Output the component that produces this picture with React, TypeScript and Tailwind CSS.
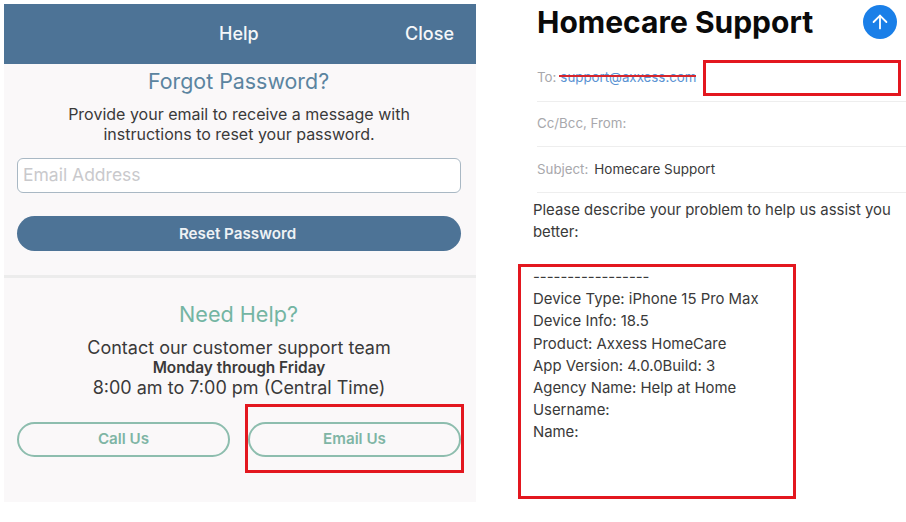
import { ArrowUp } from "lucide-react";

const font = { fontFamily: "Inter, 'Liberation Sans', sans-serif" };

function RedBox({ className }: { className: string }) {
  return <div className={`absolute border-[3px] border-[#e3171f] ${className}`} />;
}

function HelpPanel() {
  return (
    <div className="relative ml-1 mt-1 h-[498px] w-[472px] shrink-0 bg-[#faf8f9]">
      <div className="flex h-[60px] items-center justify-between bg-[#4d7396] pr-[22px] pl-[215px] pb-[2px] text-[18px] font-medium text-[#f5f7f9]">
        <span>Help</span>
        <span>Close</span>
      </div>
      <h2 className="mt-1 pr-[3px] text-center text-[21.4px] leading-[26px] text-[#5b84a0]">Forgot Password?</h2>
      <p className="mt-[11px] pr-[2px] text-center text-[16px] leading-[19.5px] text-[#3a3a3a]">
        Provide your email to receive a message with
        <br />
        instructions to reset your password.
      </p>
      <div className="ml-[13px] mr-[15px] mt-[14px] flex h-[35px] items-center rounded-[6px] border-[1.5px] border-[#a9b8c4] bg-white px-[5px] text-[17.5px] text-[#c9c9cc]">
        Email Address
      </div>
      <div className="ml-[13px] mr-[15px] mt-[23px] flex h-[35px] items-center justify-center rounded-full bg-[#4d7396] pt-[2px] pr-[3px] text-[15.2px] font-semibold text-[#eef2f5]">
        Reset Password
      </div>
      <div className="mt-[24px] h-[3px] bg-[#ececec]" />
      <h2 className="mt-[23px] pr-[3px] text-center text-[21.6px] leading-[26px] text-[#74b5a3]">Need Help?</h2>
      <p className="mt-[10px] pr-[2px] text-center text-[18px] leading-[21px] text-[#3a3a3a]">Contact our customer support team</p>
      <p className="pr-[2px] text-center text-[15.4px] font-semibold leading-[19px] text-[#3a3a3a]">Monday through Friday</p>
      <p className="pr-[2px] text-center text-[18px] leading-[22px] text-[#3a3a3a]">8:00 am to 7:00 pm (Central Time)</p>
      <div className="ml-[13px] mr-[15px] mt-[23px] flex gap-[18px]">
        <div className="flex h-[35px] flex-1 items-center justify-center rounded-full border-2 border-[#8dbdae] text-[15.2px] font-semibold text-[#7fb5a5]">
          Call Us
        </div>
        <div className="flex h-[35px] flex-1 items-center justify-center rounded-full border-2 border-[#8dbdae] text-[15.2px] font-semibold text-[#7fb5a5]">
          Email Us
        </div>
      </div>
      <RedBox className="left-[241px] top-[400px] h-[69px] w-[219px]" />
    </div>
  );
}

const deviceLines = [
  "Device Type: iPhone 15 Pro Max",
  "Device Info: 18.5",
  "Product: Axxess HomeCare",
  "App Version: 4.0.0Build: 3",
  "Agency Name: Help at Home",
  "Username:",
  "Name:",
];

function MailPanel() {
  return (
    <div className="relative ml-[42px] flex-1 bg-white">
      <div className="flex items-center justify-between pr-[9px] pl-[19px] pt-[2px]">
        <h1 className="text-[30px] font-bold leading-[40px] text-[#0a0a0a]">Homecare Support</h1>
        <div className="flex h-[34px] w-[34px] items-center justify-center rounded-full bg-[#1a7fe8]">
          <ArrowUp className="h-[22px] w-[22px] text-white" strokeWidth={2} />
        </div>
      </div>
      <div className="ml-[19px] mt-[14px] text-[13.3px]">
        <div className="flex h-[46px] items-center border-b border-[#eeeeee] pb-[2px]">
          <span className="text-[#a8a8ac]">To:</span>
          <span className="relative ml-1 text-[#5b93d3]">
            support@axxess.com
            <span className="absolute left-[-1px] right-0 top-[7px] h-[2px] bg-[#d6262c]" />
          </span>
        </div>
        <div className="flex h-[45px] items-center border-b border-[#eeeeee] text-[#a8a8ac]">Cc/Bcc, From:</div>
        <div className="flex h-[46px] items-center border-b border-[#eeeeee]">
          <span className="text-[#a8a8ac]">Subject:</span>
          <span className="ml-[6px] text-[13.5px] text-[#3a3a3a]">Homecare Support</span>
        </div>
      </div>
      <p className="ml-[15px] mt-[6px] text-[14.9px] leading-[22px] text-[#3a3a3a]">
        Please describe your problem to help us assist you
        <br />
        better:
      </p>
      <div className="ml-[15px] mt-[23px] text-[14.9px] leading-[22.2px] text-[#3a3a3a]">
        <div>-----------------</div>
        {deviceLines.map((line) => (
          <div key={line}>{line}</div>
        ))}
      </div>
      <RedBox className="left-[185px] top-[60px] h-[36px] w-[198px]" />
      <RedBox className="left-0 top-[264px] h-[235px] w-[278px]" />
    </div>
  );
}

export default function App() {
  return (
    <div className="flex h-[522px] w-[906px] overflow-hidden bg-white" style={font}>
      <HelpPanel />
      <MailPanel />
    </div>
  );
}
